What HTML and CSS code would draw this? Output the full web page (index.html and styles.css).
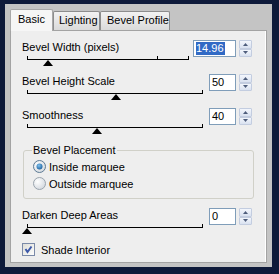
FILE: index.html
```html
<!DOCTYPE html>
<html>
<head>
<meta charset="utf-8">
<link rel="stylesheet" href="styles.css">
</head>
<body>
<div class="frame">
  <div class="tabs">
    <div class="tab active t-basic">Basic</div>
    <div class="tab t-light">Lighting</div>
    <div class="tab t-profile">Bevel Profile</div>
  </div>
  <div class="panel">
    <div class="row">
      <div class="slider">
        <div class="label">Bevel Width (pixels)</div>
        <div class="track short">
          <span class="tick" style="left:130px"></span>
          <span class="thumb" style="left:16px"></span>
        </div>
      </div>
      <div class="edit">
        <div class="box wide"><span class="sel">14.96</span></div>
        <div class="spin"><div class="btn"><svg width="5" height="3" viewBox="0 0 5 3"><polygon points="2.5,0 5,3 0,3"/></svg></div><div class="btn"><svg width="5" height="3" viewBox="0 0 5 3"><polygon points="0,0 5,0 2.5,3"/></svg></div></div>
      </div>
    </div>
    <div class="row">
      <div class="slider">
        <div class="label">Bevel Height Scale</div>
        <div class="track long">
          <span class="thumb" style="left:84px"></span>
        </div>
      </div>
      <div class="edit">
        <div class="box">50</div>
        <div class="spin"><div class="btn"><svg width="5" height="3" viewBox="0 0 5 3"><polygon points="2.5,0 5,3 0,3"/></svg></div><div class="btn"><svg width="5" height="3" viewBox="0 0 5 3"><polygon points="0,0 5,0 2.5,3"/></svg></div></div>
      </div>
    </div>
    <div class="row">
      <div class="slider">
        <div class="label">Smoothness</div>
        <div class="track long">
          <span class="thumb" style="left:65px"></span>
        </div>
      </div>
      <div class="edit">
        <div class="box">40</div>
        <div class="spin"><div class="btn"><svg width="5" height="3" viewBox="0 0 5 3"><polygon points="2.5,0 5,3 0,3"/></svg></div><div class="btn"><svg width="5" height="3" viewBox="0 0 5 3"><polygon points="0,0 5,0 2.5,3"/></svg></div></div>
      </div>
    </div>
    <fieldset class="group">
      <legend>Bevel Placement</legend>
      <div class="opt">
        <svg class="radio" width="13" height="13" viewBox="0 0 13 13"><defs><radialGradient id="rg" cx="0.35" cy="0.35" r="0.8"><stop offset="0" stop-color="#ffffff"/><stop offset="1" stop-color="#cdd3da"/></radialGradient><radialGradient id="dot" cx="0.4" cy="0.35" r="0.7"><stop offset="0" stop-color="#7fc0ee"/><stop offset="1" stop-color="#1b5f9c"/></radialGradient></defs><circle cx="6.5" cy="6.5" r="6" fill="url(#rg)" stroke="#5d7a94"/><circle cx="6.5" cy="6.5" r="3" fill="url(#dot)"/></svg>
        <span>Inside marquee</span>
      </div>
      <div class="opt">
        <svg class="radio" width="13" height="13" viewBox="0 0 13 13"><circle cx="6.5" cy="6.5" r="6" fill="url(#rg)" stroke="#9aa4ad"/></svg>
        <span>Outside marquee</span>
      </div>
    </fieldset>
    <div class="row">
      <div class="slider">
        <div class="label">Darken Deep Areas</div>
        <div class="track long">
          <span class="thumb" style="left:-5px"></span>
        </div>
      </div>
      <div class="edit">
        <div class="box">0</div>
        <div class="spin"><div class="btn"><svg width="5" height="3" viewBox="0 0 5 3"><polygon points="2.5,0 5,3 0,3"/></svg></div><div class="btn"><svg width="5" height="3" viewBox="0 0 5 3"><polygon points="0,0 5,0 2.5,3"/></svg></div></div>
      </div>
    </div>
    <div class="check">
      <svg width="13" height="13" viewBox="0 0 13 13"><defs><linearGradient id="cg" x1="0" y1="0" x2="1" y2="1"><stop offset="0" stop-color="#dcdcd6"/><stop offset="1" stop-color="#ffffff"/></linearGradient></defs><rect x="0.5" y="0.5" width="12" height="12" fill="url(#cg)" stroke="#7b8aa8"/><polyline points="3.5,6 5.5,9 9.5,3.5" fill="none" stroke="#3c58a8" stroke-width="2"/></svg>
      <span>Shade Interior</span>
    </div>
  </div>
</div>
</body>
</html>
```
FILE: styles.css
```css
html, body {
  margin: 0;
  padding: 0;
}
body {
  background: #0e1a3a;
  width: 279px;
  height: 274px;
  overflow: hidden;
  font-family: "Liberation Sans", Arial, sans-serif;
  font-size: 11px;
  color: #000;
}
.frame {
  margin: 4px 0 0 5px;
  width: 267px;
  height: 263px;
  background: #c4c4c4;
  padding: 5px 5px 4px 5px;
  box-sizing: border-box;
  display: flex;
  flex-direction: column;
}
.tabs {
  display: flex;
  align-items: flex-end;
  height: 21px;
  position: relative;
  z-index: 1;
}
.tab {
  box-sizing: border-box;
  height: 19px;
  line-height: 17px;
  border: 1px solid #8d8d8d;
  border-bottom: none;
  border-radius: 2px 2px 0 0;
  background: linear-gradient(#f2f2f2, #dadada);
  padding-left: 5px;
  margin-bottom: 0;
}
.tab.active {
  height: 22px;
  line-height: 19px;
  background: #f6f6f6;
  border-color: #a8a8a8;
  margin-bottom: -1px;
  padding-left: 7px;
}
.t-basic { width: 43px; }
.t-light { width: 47px; }
.t-profile { width: 70px; padding-left: 6px; }
.panel {
  flex: 1;
  background: #eeeeee;
  border: 1px solid #a3a3a3;
  box-shadow: inset -1px 0 0 #ffffff;
  padding: 9px 0 0 11px;
  display: flex;
  flex-direction: column;
}
.row {
  display: flex;
  height: 34px;
  flex-shrink: 0;
}
.slider {
  display: flex;
  flex-direction: column;
  width: 184px;
}
.label {
  margin-top: 1px;
  height: 13px;
  line-height: 13px;
}
.track {
  position: relative;
  margin-left: 5px;
  height: 5px;
  border-bottom: 1px solid #000;
}
.track.short { width: 162px; }
.track.long { width: 176px; }
.track::before, .track::after, .tick {
  content: "";
  position: absolute;
  bottom: 0;
  width: 1px;
  height: 3px;
  background: #000;
}
.track::before { left: 0; }
.track::after { right: 0; }
.thumb {
  position: absolute;
  top: 6px;
  width: 0;
  height: 0;
  border-left: 5.5px solid transparent;
  border-right: 5.5px solid transparent;
  border-bottom: 6px solid #000;
}
.edit {
  display: flex;
  margin-left: auto;
  margin-right: 14px;
  align-items: flex-start;
}
.box {
  box-sizing: border-box;
  width: 27px;
  height: 17px;
  border: 1px solid #7f9db9;
  background: #fff;
  line-height: 15px;
  padding-left: 2px;
}
.box.wide { width: 43px; }
.sel {
  background: #316ac5;
  color: #fff;
  display: inline-block;
  line-height: 13px;
  padding: 0 1px 0 0;
}
.spin {
  display: flex;
  flex-direction: column;
  width: 13px;
  height: 17px;
  margin-left: 3px;
}
.btn {
  flex: 1;
  box-sizing: border-box;
  border: 1px solid #c3cde0;
  border-radius: 1px;
  background: linear-gradient(#f3f6fc, #d9e1f0);
  display: flex;
  align-items: center;
  justify-content: center;
}
.btn svg { fill: #4e5d7c; display: block; }
.group {
  margin: 2px 0 0 1px;
  width: 231px;
  height: 55px;
  box-sizing: border-box;
  border: 1px solid #d0d0c8;
  border-radius: 3px;
  padding: 1px 0 0 9px;
  min-width: 0;
}
.group legend {
  padding: 0 1px;
  line-height: 13px;
  margin-left: -1px;
}
.opt {
  display: flex;
  align-items: center;
  height: 17px;
}
.radio { display: block; margin-right: 3px; }
.group + .row { margin-top: 9px; }
.check {
  display: flex;
  align-items: center;
  margin-top: 1px;
  height: 13px;
}
.check svg { display: block; margin-right: 6px; }
```
